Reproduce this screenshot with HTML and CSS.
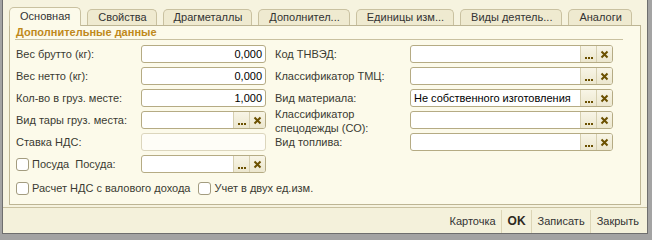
FILE: index.html
```html
<!DOCTYPE html>
<html lang="ru">
<head>
    <meta charset="UTF-8">
    <title>Номенклатура</title>
    <link rel="stylesheet" href="styles.css">
</head>
<body>
    <div class="window">
        <div class="tabs">
            <div class="tab active">Основная</div>
            <div class="tab">Свойства</div>
            <div class="tab">Драгметаллы</div>
            <div class="tab">Дополнител...</div>
            <div class="tab">Единицы изм...</div>
            <div class="tab">Виды деятель...</div>
            <div class="tab">Аналоги</div>
        </div>

        <div class="panel">
            <div class="group-title">Дополнительные данные</div>

            <div class="columns">
                <div class="col col-left">
                    <div class="label">Вес брутто (кг):</div>
                    <div class="field num">0,000</div>

                    <div class="label">Вес нетто (кг):</div>
                    <div class="field num">0,000</div>

                    <div class="label">Кол-во в груз. месте:</div>
                    <div class="field num">1,000</div>

                    <div class="label">Вид тары груз. места:</div>
                    <div class="field with-btns">
                        <span class="value"></span>
                        <span class="btn dots"><i></i><i></i><i></i></span>
                        <span class="btn clear"><svg width="9" height="9" viewBox="0 0 9 9"><path d="M1.5 1.5 L7.5 7.5 M7.5 1.5 L1.5 7.5" stroke="#6b5000" stroke-width="2"/></svg></span>
                    </div>

                    <div class="label">Ставка НДС:</div>
                    <div class="field disabled"></div>

                    <label class="label check"><span class="box"></span>Посуда&nbsp; Посуда:</label>
                    <div class="field with-btns">
                        <span class="value"></span>
                        <span class="btn dots"><i></i><i></i><i></i></span>
                        <span class="btn clear"><svg width="9" height="9" viewBox="0 0 9 9"><path d="M1.5 1.5 L7.5 7.5 M7.5 1.5 L1.5 7.5" stroke="#6b5000" stroke-width="2"/></svg></span>
                    </div>
                </div>

                <div class="col col-right">
                    <div class="label">Код ТНВЭД:</div>
                    <div class="field with-btns">
                        <span class="value"></span>
                        <span class="btn dots"><i></i><i></i><i></i></span>
                        <span class="btn clear"><svg width="9" height="9" viewBox="0 0 9 9"><path d="M1.5 1.5 L7.5 7.5 M7.5 1.5 L1.5 7.5" stroke="#6b5000" stroke-width="2"/></svg></span>
                    </div>

                    <div class="label">Классификатор ТМЦ:</div>
                    <div class="field with-btns">
                        <span class="value"></span>
                        <span class="btn dots"><i></i><i></i><i></i></span>
                        <span class="btn clear"><svg width="9" height="9" viewBox="0 0 9 9"><path d="M1.5 1.5 L7.5 7.5 M7.5 1.5 L1.5 7.5" stroke="#6b5000" stroke-width="2"/></svg></span>
                    </div>

                    <div class="label">Вид материала:</div>
                    <div class="field with-btns">
                        <span class="value">Не собственного изготовления</span>
                        <span class="btn dots"><i></i><i></i><i></i></span>
                        <span class="btn clear"><svg width="9" height="9" viewBox="0 0 9 9"><path d="M1.5 1.5 L7.5 7.5 M7.5 1.5 L1.5 7.5" stroke="#6b5000" stroke-width="2"/></svg></span>
                    </div>

                    <div class="label two-lines">Классификатор<br>спецодежды (СО):</div>
                    <div class="field with-btns">
                        <span class="value"></span>
                        <span class="btn dots"><i></i><i></i><i></i></span>
                        <span class="btn clear"><svg width="9" height="9" viewBox="0 0 9 9"><path d="M1.5 1.5 L7.5 7.5 M7.5 1.5 L1.5 7.5" stroke="#6b5000" stroke-width="2"/></svg></span>
                    </div>

                    <div class="label">Вид топлива:</div>
                    <div class="field with-btns">
                        <span class="value"></span>
                        <span class="btn dots"><i></i><i></i><i></i></span>
                        <span class="btn clear"><svg width="9" height="9" viewBox="0 0 9 9"><path d="M1.5 1.5 L7.5 7.5 M7.5 1.5 L1.5 7.5" stroke="#6b5000" stroke-width="2"/></svg></span>
                    </div>
                </div>
            </div>

            <div class="checks">
                <label class="check nds"><span class="box"></span>Расчет НДС с валового дохода</label>
                <label class="check"><span class="box"></span>Учет в двух ед.изм.</label>
            </div>
        </div>

        <div class="footer">
            <span class="action">Карточка</span>
            <span class="action bold">OK</span>
            <span class="action">Записать</span>
            <span class="action">Закрыть</span>
        </div>
    </div>
</body>
</html>
```

FILE: styles.css
```css
* {
    margin: 0;
    padding: 0;
    box-sizing: border-box;
}

body {
    font-family: 'Liberation Sans', Arial, sans-serif;
    font-size: 11px;
    color: #3a3a32;
    background: #a3a3a3;
    width: 652px;
    height: 240px;
    overflow: hidden;
}

.window {
    margin: 0 4px 0 2px;
    height: 234px;
    background: #f6f3df;
    border-left: 1px solid #6e6e6e;
    border-right: 1px solid #6e6e6e;
    border-bottom: 1px solid #6e6e6e;
    display: flex;
    flex-direction: column;
}

.tabs {
    display: flex;
    align-items: flex-end;
    gap: 6px;
    padding: 7px 0 0 6px;
    height: 25px;
    position: relative;
    z-index: 1;
}

.tab {
    height: 16px;
    line-height: 15px;
    padding: 0 9px 0 10px;
    background: #efead0;
    border: 1px solid #c9c1a0;
    border-bottom: none;
    border-radius: 5px 5px 0 0;
    color: #333;
    white-space: nowrap;
}

.tab.active {
    height: 19px;
    line-height: 17px;
    padding-right: 10px;
    background: #fcfaea;
    margin-bottom: -1px;
}

.panel {
    margin: 0 6px;
    height: 180px;
    background: #fcfaea;
    border: 1px solid #bdb594;
    padding: 0 0 0 6px;
}

.group-title {
    width: 608px;
    margin-left: -1px;
    height: 14px;
    line-height: 13px;
    padding-left: 1px;
    font-weight: bold;
    color: #c0891b;
    border-bottom: 1px solid #c9c1a0;
    margin-bottom: 5px;
}

.columns {
    display: flex;
    gap: 9px;
}

.col {
    display: grid;
    grid-auto-rows: 18px;
    row-gap: 4px;
    align-items: center;
}

.col-left {
    grid-template-columns: 125px 125px;
}

.col-right {
    grid-template-columns: 135px 203px;
}

.label {
    white-space: nowrap;
    line-height: 13px;
}

.label.two-lines {
    line-height: 14px;
    margin-top: 1px;
}

.field {
    height: 18px;
    background: #fff;
    border: 1px solid #b5ab84;
    border-radius: 3px;
    color: #000;
    line-height: 16px;
    overflow: hidden;
}

.field.num {
    text-align: right;
    padding-right: 3px;
}

.field.disabled {
    border-color: #dcd6bd;
    background: #fefdf7;
}

.with-btns {
    display: flex;
}

.with-btns .value {
    flex: 1;
    padding-left: 3px;
    white-space: nowrap;
}

.btn {
    width: 16px;
    background: linear-gradient(#f8f5e6, #ece7cf);
    border-left: 1px solid #d6cfb0;
    display: flex;
    justify-content: center;
    align-items: center;
}

.btn.dots {
    align-items: flex-end;
    gap: 1px;
    padding-bottom: 3px;
}

.btn.dots i {
    width: 2px;
    height: 2px;
    background: #6b5000;
}

.check {
    display: flex;
    align-items: center;
    white-space: nowrap;
}

.box {
    width: 13px;
    height: 13px;
    background: #fff;
    border: 1px solid #a39c7f;
    border-radius: 3px;
    margin-right: 3px;
}

.checks {
    display: flex;
    margin-top: 8px;
    height: 14px;
}

.checks .nds {
    margin-right: 8px;
}

.footer {
    margin-top: 2px;
    flex: 1;
    background: #f4f1db;
    border-top: 1px solid #c9c1a0;
    display: flex;
    justify-content: flex-end;
    align-items: stretch;
    padding: 2px 3px 0 0;
}

.action {
    display: flex;
    align-items: center;
    padding: 0 5px 1px 6px;
    color: #333;
    border-left: 1px solid #dcd5b6;
}

.action:first-child {
    border-left: none;
}

.action.bold {
    font-weight: bold;
    font-size: 12px;
    color: #2e2a1e;
}
```
